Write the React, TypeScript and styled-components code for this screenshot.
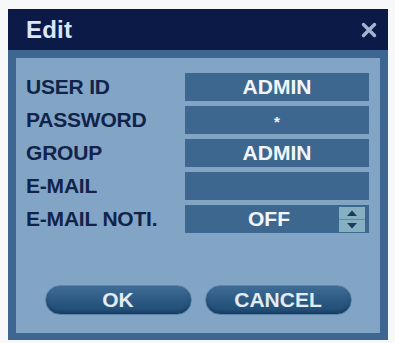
import styled, { createGlobalStyle } from "styled-components"

const GlobalStyle = createGlobalStyle`
	html, body {
		margin: 0;
		padding: 0;
		background: #f7f8fa;
	}
	body {
		font-family: "Liberation Sans", Arial, sans-serif;
	}
`

const fields = [
	{ label: "USER ID", value: "ADMIN" },
	{ label: "PASSWORD", value: "*", masked: true },
	{ label: "GROUP", value: "ADMIN" },
	{ label: "E-MAIL", value: "" },
	{ label: "E-MAIL NOTI.", value: "OFF", spinner: true },
]

const App = () => {
	return (
		<>
			<GlobalStyle />
			<Page>
				<Dialog>
					<TitleBar>
						<Title>Edit</Title>
						<CloseIcon viewBox="0 0 16 16" aria-label="close">
							<path d="M2.5 2.5 L13.5 13.5 M13.5 2.5 L2.5 13.5" />
						</CloseIcon>
					</TitleBar>
					<Frame>
						<Panel>
							<Form>
								{fields.map((f) => (
									<Row key={f.label}>
										<Label>{f.label}</Label>
										<Field $withSpinner={!!f.spinner} $masked={!!f.masked}>
											{f.value}
											{f.spinner && (
												<Spinner>
													<SpinHalf>
														<svg viewBox="0 0 12 8" width="12" height="8">
															<path d="M1 7 L6 1.5 L11 7 Z" fill="#1b3a5c" />
														</svg>
													</SpinHalf>
													<SpinHalf>
														<svg viewBox="0 0 12 8" width="12" height="8">
															<path d="M1 1 L6 6.5 L11 1 Z" fill="#1b3a5c" />
														</svg>
													</SpinHalf>
												</Spinner>
											)}
										</Field>
									</Row>
								))}
							</Form>
							<Buttons>
								<PillButton>OK</PillButton>
								<PillButton>CANCEL</PillButton>
							</Buttons>
						</Panel>
					</Frame>
				</Dialog>
			</Page>
		</>
	)
}

export default App

const Page = styled.div`
	padding: 9px 7px 3px 8px;
`

const Dialog = styled.div`
	width: 380px;
	display: flex;
	flex-direction: column;
`

const TitleBar = styled.div`
	height: 41px;
	background: #0c1a47;
	display: flex;
	align-items: center;
	justify-content: space-between;
	padding: 0 11px 0 18px;
	box-sizing: border-box;
`

const Title = styled.span`
	font-size: 24px;
	font-weight: 700;
	color: #dbe6f6;
	letter-spacing: 0.2px;
`

const CloseIcon = styled.svg`
	width: 16px;
	height: 16px;
	stroke: #a3b3d2;
	stroke-width: 3.4;
	stroke-linecap: round;
	fill: none;
`

const Frame = styled.div`
	background: #3d6690;
	padding: 8px 8px 7px 8px;
`

const Panel = styled.div`
	background: #82a5c6;
	height: 275px;
	box-sizing: border-box;
	padding: 15px 11px 18px 10px;
	display: flex;
	flex-direction: column;
	justify-content: space-between;
`

const Form = styled.div`
	display: flex;
	flex-direction: column;
	gap: 5px;
`

const Row = styled.div`
	display: grid;
	grid-template-columns: 1fr 184px;
	align-items: center;
	height: 28px;
`

const Label = styled.span`
	font-size: 21px;
	font-weight: 700;
	color: #11234b;
	white-space: nowrap;
	letter-spacing: -0.2px;
`

const Field = styled.div<{ $withSpinner: boolean; $masked: boolean }>`
	position: relative;
	height: 28px;
	background: #3e6790;
	color: #f2f6fa;
	font-size: ${(p) => (p.$masked ? "15px" : "21px")};
	font-weight: 700;
	display: flex;
	align-items: center;
	justify-content: center;
	padding-right: ${(p) => (p.$withSpinner ? "16px" : "0")};
	padding-top: ${(p) => (p.$masked ? "3px" : "0")};
	box-sizing: border-box;
`

const Spinner = styled.div`
	position: absolute;
	right: 4px;
	top: 2px;
	width: 26px;
	height: 25px;
	display: flex;
	flex-direction: column;
	gap: 1px;
	background: #5e8aa4;
`

const SpinHalf = styled.div`
	flex: 1;
	background: #86b0c2;
	display: flex;
	align-items: center;
	justify-content: center;
`

const Buttons = styled.div`
	display: flex;
	justify-content: center;
	gap: 13px;
	padding-left: 1px;
`

const PillButton = styled.button`
	width: 147px;
	height: 30px;
	border-radius: 15px;
	border: 1.5px solid #5d86aa;
	background: linear-gradient(to bottom, #3f6d96 0%, #2a5881 55%, #1f4a72 100%);
	box-shadow: inset 0 -2px 3px rgba(10, 30, 60, 0.35);
	color: #e2eaf2;
	font-family: "Liberation Sans", Arial, sans-serif;
	font-size: 21px;
	font-weight: 700;
	padding: 0;
	display: flex;
	align-items: center;
	justify-content: center;
	cursor: pointer;
`
